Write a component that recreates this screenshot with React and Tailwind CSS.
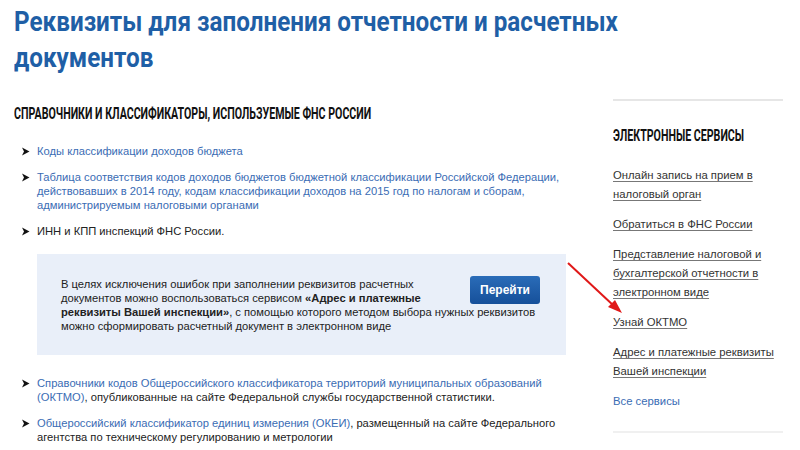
import React from 'react';

// condensed display face: Roboto bold squeezed horizontally (no condensed family installed)
const cond = 'inline-block origin-left whitespace-nowrap font-["Roboto",sans-serif] font-bold';

function Bullet() {
  return (
    <svg width="9" height="9" viewBox="0 0 9 9" className="absolute left-[-16px] top-[3px]">
      <path d="M1 0.5 L8.5 4.5 L1 8.5 L3 4.5 Z" fill="#111" />
    </svg>
  );
}

function Item({ children }) {
  return (
    <li className="relative">
      <Bullet />
      {children}
    </li>
  );
}

const link = 'text-[#3a6cb4]';

const services = [
  'Онлайн запись на прием в налоговый орган',
  'Обратиться в ФНС России',
  'Представление налоговой и бухгалтерской отчетности в электронном виде',
  'Узнай ОКТМО',
  'Адрес и платежные реквизиты Вашей инспекции',
];

export default function App() {
  return (
    <div className="relative w-[800px] h-[450px] overflow-hidden bg-white font-['Liberation_Sans',Arial,sans-serif] text-[#222]">
      <h1 className="pl-[14px] pt-[4px]">
        <span className={`${cond} scale-x-[0.866] text-[28px] leading-[36px] text-[#1f5fa6]`}>
          Реквизиты для заполнения отчетности и расчетных
          <br />
          документов
        </span>
      </h1>

      <div className="flex">
        <div className="w-[566px] pl-[14px]">
          <h2 className="mt-[29px] leading-[18px]">
            <span className={`${cond} scale-x-[0.665] text-[16px] leading-[18px] text-[#111] uppercase`}>
              Справочники и классификаторы, используемые ФНС России
            </span>
          </h2>

          <ul className="mt-[21px] flex flex-col gap-[12px] pl-[23px] text-[11.2px] leading-[14px]">
            <Item>
              <span className={link}>Коды классификации доходов бюджета</span>
            </Item>
            <Item>
              <span className={link}>
                Таблица соответствия кодов доходов бюджетов бюджетной классификации Российской Федерации,
                действовавших в 2014 году, кодам классификации доходов на 2015 год по налогам и сборам,
                администрируемым налоговыми органами
              </span>
            </Item>
            <Item>ИНН и КПП инспекций ФНС России.</Item>
          </ul>

          <div className="ml-[23px] mt-[16px] h-[101px] flex items-center bg-[#e9eff9] pl-[24px] pr-[26px]">
            <div className="text-[11.2px] leading-[14px] text-[#222]">
              <button className="float-right ml-[22px] mt-[-1px] h-[28px] w-[70px] rounded-[3px] bg-gradient-to-b from-[#2a6cb8] to-[#16509a] text-[12px] font-bold text-white">
                Перейти
              </button>
              В целях исключения ошибок при заполнении реквизитов расчетных документов можно воспользоваться
              сервисом <b>«Адрес и платежные реквизиты Вашей инспекции»</b>, с помощью которого методом выбора
              нужных реквизитов можно сформировать расчетный документ в электронном виде
            </div>
          </div>

          <ul className="mt-[21px] flex flex-col gap-[12px] pl-[23px] text-[11.2px] leading-[14px]">
            <Item>
              <span className={link}>
                Справочники кодов Общероссийского классификатора территорий муниципальных образований
                (ОКТМО)
              </span>
              , опубликованные на сайте Федеральной службы государственной статистики.
            </Item>
            <Item>
              <span className={link}>Общероссийский классификатор единиц измерения (ОКЕИ)</span>, размещенный на
              сайте Федерального агентства по техническому регулированию и метрологии
            </Item>
          </ul>
        </div>

        <aside className="ml-[47px] mt-[23px] w-[170px]">
          <div className="border-t-2 border-[#e6e6e6] pt-[26px]">
            <h3 className="leading-[18px]">
              <span className={`${cond} scale-x-[0.665] text-[16px] leading-[18px] text-[#111] uppercase`}>
                Электронные сервисы
              </span>
            </h3>
            <ul className="mt-[21px] flex flex-col gap-[11px] text-[11.3px] leading-[19px]">
              {services.map(s => (
                <li key={s}>
                  <span className="text-[#333] underline decoration-[#777] underline-offset-2">{s}</span>
                </li>
              ))}
              <li className={link}>Все сервисы</li>
            </ul>
          </div>
          <div className="mt-[20px] border-t-2 border-[#f0f0f0]" />
        </aside>
      </div>

      <svg className="absolute left-0 top-0 pointer-events-none" width="800" height="450">
        <line x1="568" y1="263" x2="614" y2="306" stroke="#e01818" strokeWidth="2" />
        <path d="M622 313 L608 307 L615 300 Z" fill="#e01818" />
      </svg>
    </div>
  );
}
